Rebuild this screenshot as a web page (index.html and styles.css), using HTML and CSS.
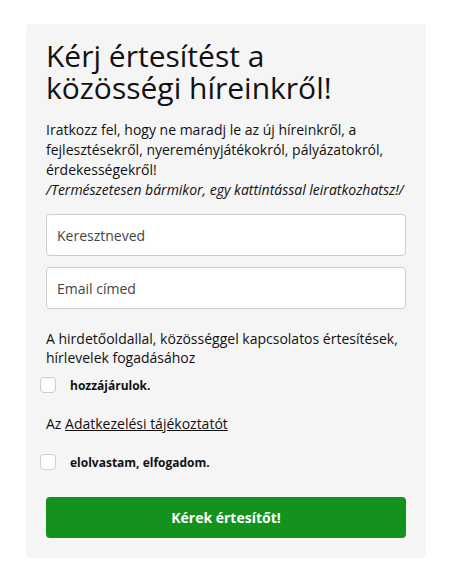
FILE: index.html
```html
<!DOCTYPE html>
<html lang="hu">
<head>
<meta charset="utf-8">
<title>Feliratkozás</title>
<link rel="stylesheet" href="styles.css">
</head>
<body>
<div class="card">
  <h1 class="title">Kérj értesítést a közösségi híreinkről!</h1>
  <p class="intro">Iratkozz fel, hogy ne maradj le az új híreinkről, a fejlesztésekről, nyereményjátékokról, pályázatokról, érdekességekről!<br><em>/Természetesen bármikor, egy kattintással leiratkozhatsz!/</em></p>
  <input class="field field-first" type="text" placeholder="Keresztneved">
  <input class="field field-second" type="email" placeholder="Email címed">
  <p class="consent-text">A hirdetőoldallal, közösséggel kapcsolatos értesítések, hírlevelek fogadásához</p>
  <label class="check"><span class="box"></span><span class="check-label">hozzájárulok.</span></label>
  <p class="policy">Az <a href="#">Adatkezelési tájékoztatót</a></p>
  <label class="check check-second"><span class="box"></span><span class="check-label">elolvastam, elfogadom.</span></label>
  <button class="submit" type="button">Kérek értesítőt!</button>
</div>
</body>
</html>
```
FILE: styles.css
```css
html, body {
  margin: 0;
  padding: 0;
  background: #ffffff;
}
body {
  font-family: "Open Sans", "Liberation Sans", sans-serif;
  color: #111;
  padding: 24px 0 0 26px;
}
.card {
  width: 360px;
  padding: 16px 20px 20px 20px;
  background: #f5f5f5;
  border-radius: 4px;
  display: flex;
  flex-direction: column;
}
.title {
  margin: 0;
  font-size: 30px;
  font-weight: 400;
  line-height: 32px;
  color: #111;
}
.intro {
  margin: 16px 0 0 0;
  font-size: 14px;
  line-height: 20px;
}
.intro em {
  font-style: italic;
}
.field {
  box-sizing: border-box;
  width: 360px;
  height: 42px;
  margin: 14px 0 0 0;
  padding: 0 10px;
  border: 1px solid #cccccc;
  border-radius: 4px;
  background: #fff;
  font-family: "Open Sans", "Liberation Sans", sans-serif;
  font-size: 14px;
  color: #333;
  outline: none;
}
.field::placeholder {
  color: #444;
  opacity: 1;
}
.field-second {
  margin-top: 11px;
}
.consent-text {
  margin: 20px 0 0 0;
  font-size: 14px;
  line-height: 19px;
}
.check {
  display: flex;
  align-items: center;
  margin: 9px 0 0 -6px;
  height: 18px;
}
.box {
  box-sizing: border-box;
  width: 16px;
  height: 16px;
  border: 1px solid #cccccc;
  border-radius: 4px;
  background: #fff;
}
.check-label {
  margin-left: 14px;
  font-size: 12px;
  font-weight: 700;
  color: #111;
}
.policy {
  margin: 20px 0 0 0;
  font-size: 14px;
  line-height: 20px;
}
.policy a {
  color: #111;
  text-decoration: underline;
}
.check-second {
  margin-top: 19px;
}
.submit {
  margin-top: 26px;
  width: 360px;
  height: 41px;
  border: none;
  border-radius: 4px;
  background: #13931e;
  color: #fff;
  font-family: "Open Sans", "Liberation Sans", sans-serif;
  font-size: 14px;
  font-weight: 700;
}
```
